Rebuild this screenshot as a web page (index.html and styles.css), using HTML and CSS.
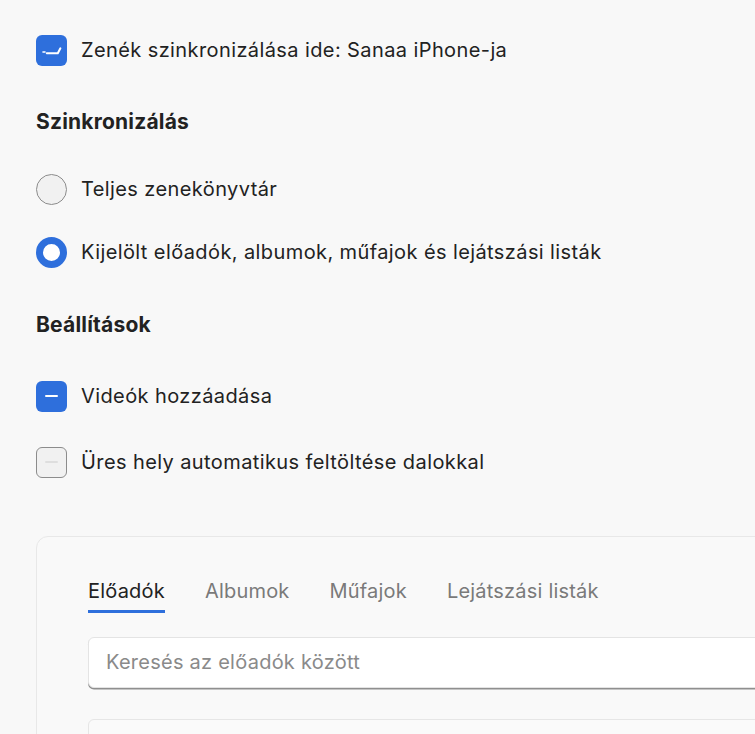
FILE: index.html
```html
<!DOCTYPE html>
<html lang="hu">
<head>
<meta charset="utf-8">
<link rel="stylesheet" href="styles.css">
</head>
<body>
<div class="page">
  <div class="row r1">
    <span class="box checked">
      <svg viewBox="0 0 31 31" width="31" height="31"><path d="M7 17h2" stroke="#fff" stroke-width="1.6" fill="none" stroke-linecap="round"/><path d="M10.8 18.3h11l2.6-5" stroke="#fff" stroke-width="2" fill="none" stroke-linecap="round" stroke-linejoin="round"/></svg>
    </span>
    <span class="label">Zenék szinkronizálása ide: Sanaa iPhone-ja</span>
  </div>
  <h2 class="heading h1">Szinkronizálás</h2>
  <div class="row r2">
    <span class="radio"></span>
    <span class="label">Teljes zenekönyvtár</span>
  </div>
  <div class="row r3">
    <span class="radio on"></span>
    <span class="label">Kijelölt előadók, albumok, műfajok és lejátszási listák</span>
  </div>
  <h2 class="heading h2">Beállítások</h2>
  <div class="row r4">
    <span class="box checked"><span class="dash"></span></span>
    <span class="label">Videók hozzáadása</span>
  </div>
  <div class="row r5">
    <span class="box"><span class="dash light"></span></span>
    <span class="label">Üres hely automatikus feltöltése dalokkal</span>
  </div>
  <div class="panel">
    <div class="tabs">
      <span class="tab active">Előadók</span>
      <span class="tab">Albumok</span>
      <span class="tab">Műfajok</span>
      <span class="tab">Lejátszási listák</span>
    </div>
    <div class="search">Keresés az előadók között</div>
    <div class="list"></div>
  </div>
</div>
</body>
</html>
```
FILE: styles.css
```css
html, body {
  margin: 0;
  padding: 0;
  background: #f8f8f8;
  overflow: hidden;
}
body {
  width: 755px;
  height: 734px;
  font-family: Inter, "Liberation Sans", Arial, sans-serif;
  color: #222;
}
.page {
  padding: 34px 0 0 36px;
  display: flex;
  flex-direction: column;
}
.row {
  display: flex;
  align-items: center;
  gap: 14px;
  height: 32px;
}
.label {
  font-size: 20px;
  letter-spacing: 0.4px;
}
.heading {
  margin: 0;
  font-size: 21px;
  line-height: 24px;
  font-weight: 700;
  letter-spacing: 0.2px;
  color: #222;
}
.h1 { margin-top: 44px; }
.r2 { margin-top: 39px; }
.r3 { margin-top: 31px; }
.h2 { margin-top: 45px; }
.r4 { margin-top: 43px; }
.r5 { margin-top: 34px; }

.box {
  width: 31px;
  height: 31px;
  box-sizing: border-box;
  border-radius: 6px;
  background: #f1f1f1;
  border: 1.5px solid #8c8c8c;
  display: flex;
  align-items: center;
  justify-content: center;
  flex: none;
}
.box.checked {
  background: #2e6fdc;
  border: none;
}
.box svg { display: block; }
.dash {
  width: 13px;
  height: 2px;
  border-radius: 1px;
  background: #fff;
}
.dash.light { background: #dedede; }

.radio {
  width: 31px;
  height: 31px;
  box-sizing: border-box;
  border-radius: 50%;
  background: #f1f1f1;
  border: 1.5px solid #8c8c8c;
  flex: none;
}
.radio.on {
  background: #fff;
  border: 7px solid #2e6fdc;
}

.panel {
  margin-top: 58px;
  width: 780px;
  height: 260px;
  box-sizing: border-box;
  border: 1.5px solid #e8e8e8;
  border-radius: 12px;
  background: #f9f9f9;
  padding: 42px 0 0 51px;
}
.tabs {
  display: flex;
  gap: 40px;
  height: 34px;
}
.tab {
  font-size: 20px;
  line-height: 24px;
  letter-spacing: 0.2px;
  color: #7a7a7a;
  height: 34px;
  box-sizing: border-box;
}
.tab.active {
  color: #222;
  border-bottom: 3px solid #2e6fdc;
}
.search {
  margin-top: 24px;
  height: 51px;
  box-sizing: border-box;
  background: #fff;
  border: 1px solid #e4e4e4;
  border-radius: 6px;
  box-shadow: 0 1.5px 0 #8f8f8f;
  padding: 12px 0 0 17px;
  font-size: 20px;
  line-height: 24px;
  letter-spacing: 0.25px;
  color: #8a8a8a;
}
.list {
  margin-top: 31px;
  height: 60px;
  background: #fafafa;
  border: 1px solid #e6e6e6;
  border-radius: 6px;
}
```
